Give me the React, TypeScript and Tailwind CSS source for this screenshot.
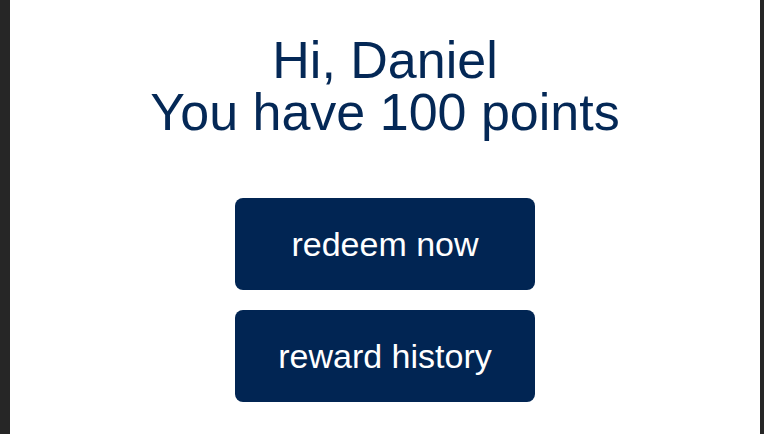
export default function App() {
  return (
    <div
      className="flex h-screen w-full bg-[#262626]"
      style={{ fontFamily: '"Liberation Sans", Arial, sans-serif' }}
    >
      <div className="w-[10px] shrink-0" />

      <div className="flex flex-1 flex-col items-center bg-white pt-[34px]">
        <h1 className="text-center text-[52px] font-normal leading-[52px] text-[#042856]">
          Hi, Daniel
          <br />
          You have 100 points
        </h1>

        <div className="mt-[60px] flex flex-col gap-5">
          <button className="h-[92px] w-[300px] rounded-lg bg-[#012553] text-[34px] text-white">
            redeem now
          </button>
          <button className="h-[92px] w-[300px] rounded-lg bg-[#012553] text-[34px] text-white">
            reward history
          </button>
        </div>
      </div>

      <div className="w-[4px] shrink-0" />
    </div>
  );
}
